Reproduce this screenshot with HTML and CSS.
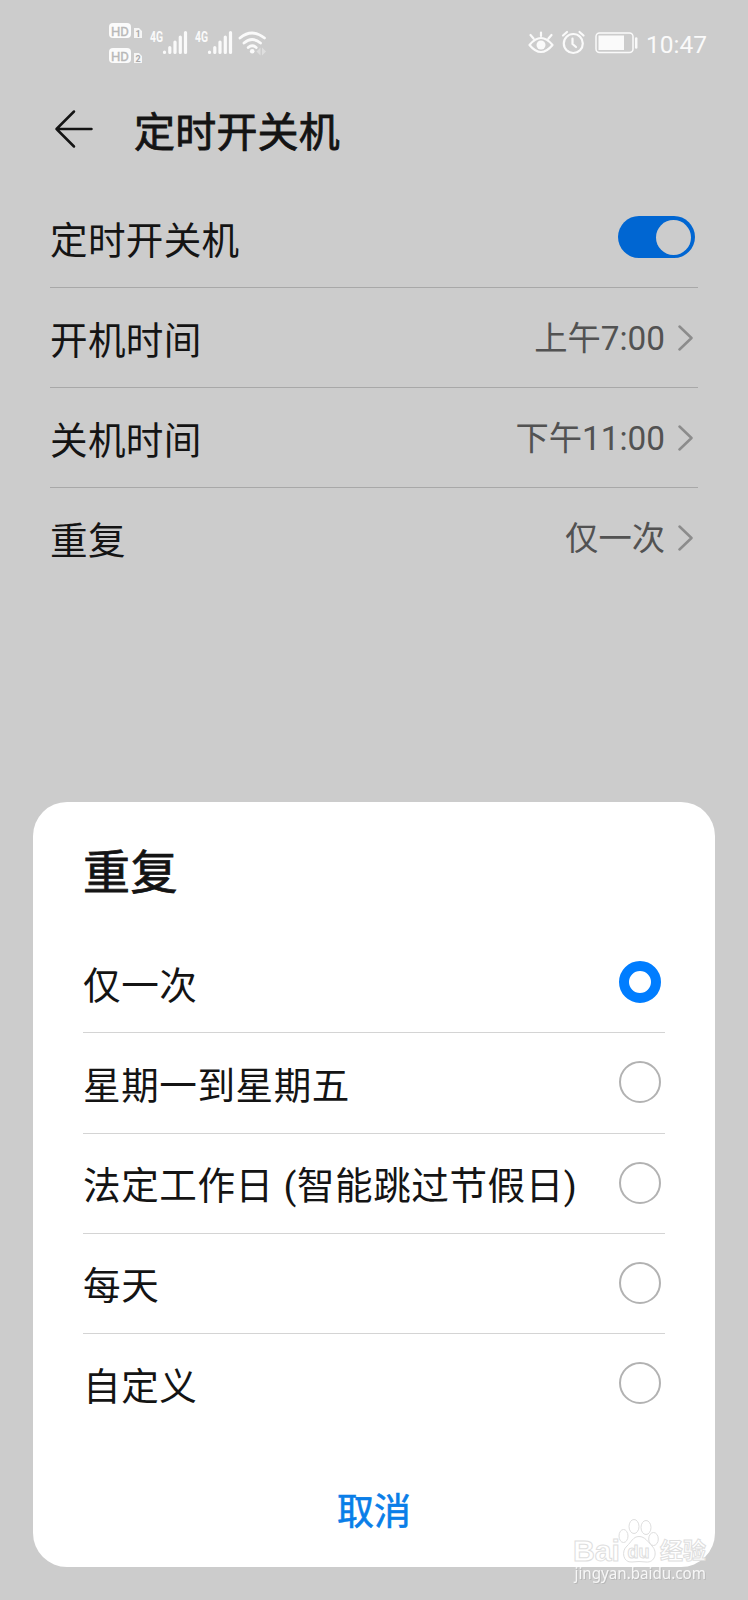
FILE: index.html
```html
<!DOCTYPE html>
<html lang="zh-CN">
<head>
<meta charset="utf-8">
<title>定时开关机</title>
<link rel="stylesheet" href="styles.css">
</head>
<body>
<div class="screen">
  <div class="status">
    <svg class="status-left" width="160" height="44" viewBox="108 20 160 44">
      <rect x="109" y="23" width="22" height="15" rx="4" fill="#fbfbfb"/>
      <rect x="109" y="48" width="22" height="15" rx="4" fill="#fbfbfb"/>
      <g class="hd">
        <text x="111" y="35.5" textLength="18" lengthAdjust="spacingAndGlyphs">HD</text>
        <text x="111" y="60.5" textLength="18" lengthAdjust="spacingAndGlyphs">HD</text>
      </g>
      <path d="M134 28h5l3 3v7h-8zM134 53h5l3 3v7h-8z" fill="#f5f5f5"/>
      <g class="sim"><text x="135.500" y="36.800">1</text><text x="135.500" y="61.800">2</text></g>
      <g class="net">
        <text x="150" y="42" textLength="13" lengthAdjust="spacingAndGlyphs">4G</text>
        <text x="195" y="42" textLength="13" lengthAdjust="spacingAndGlyphs">4G</text>
      </g>
      <g stroke="#fafafa" stroke-width="3.200" stroke-linecap="round">
        <path d="M164.500 52v.5M169.800 47.500v5M175 42v10.500M180.300 37v15.500M185.500 32.500v20"/>
        <path d="M209.500 52v.5M214.800 47.500v5M220 42v10.500M225.300 37v15.500M230.500 32.500v20"/>
      </g>
      <g fill="none" stroke="#fafafa" stroke-width="2.800" stroke-linecap="round">
        <path d="M240 38q12-10 24.500 0M244 43q8-7 16.500 0M248.200 47.500q4-3.500 8 0"/>
      </g>
      <circle cx="252.200" cy="51.200" r="2.300" fill="#fafafa"/>
      <path d="M260.500 47.500v8l-4-4zM262 47.500v8l4-4z" fill="#dedede"/>
    </svg>
    <div class="status-right">
      <svg width="112" height="30" viewBox="527 28 112 30" fill="none" stroke="#fafafa" stroke-width="2.200" stroke-linecap="round" stroke-linejoin="round">
        <path d="M529.500 45q11.500-14 23 0q-11.500 14-23 0zM541 36v-3.500M533.500 38.500l-3-3.500M548.500 38.500l3-3.500"/>
        <circle cx="541" cy="45" r="4.500" fill="#fafafa" stroke="none"/>
        <circle cx="573.300" cy="43.500" r="9.500"/>
        <path d="M572.500 38.500v5.500l3.500 3M563 35.500l4-3.500M579.500 32l4 3.500"/>
        <rect x="596" y="33" width="37" height="19.500" rx="3.500" stroke-width="1.500"/>
        <path d="M598.500 35.500H624V50h-25.500z" fill="#fafafa" stroke="none"/>
        <path d="M636.200 38.500v9" stroke-width="2.500"/>
      </svg>
      <span class="clock">10:47</span>
    </div>
  </div>

  <div class="header">
    <svg width="40" height="40" viewBox="0 0 40 40" fill="none" stroke="#141414" stroke-width="2.500" stroke-linecap="round" stroke-linejoin="round"><path d="M20 2.500L2.500 20L20 37.500M2.500 20H37.500"/></svg>
    <h1>定时开关机</h1>
  </div>

  <div class="settings">
    <div class="row"><span class="name">定时开关机</span><span class="switch"><span class="knob"></span></span></div>
    <div class="row"><span class="name">开机时间</span><span class="value">上午7:00</span><svg class="chev" viewBox="0 0 16 28"><path d="M1.500 2.500L13.500 14L1.500 25.500"/></svg></div>
    <div class="row"><span class="name">关机时间</span><span class="value">下午11:00</span><svg class="chev" viewBox="0 0 16 28"><path d="M1.500 2.500L13.500 14L1.500 25.500"/></svg></div>
    <div class="row"><span class="name">重复</span><span class="value">仅一次</span><svg class="chev" viewBox="0 0 16 28"><path d="M1.500 2.500L13.500 14L1.500 25.500"/></svg></div>
  </div>

  <div class="sheet">
    <h2>重复</h2>
    <div class="option"><span>仅一次</span><i class="radio on"></i></div>
    <div class="option"><span>星期一到星期五</span><i class="radio"></i></div>
    <div class="option"><span>法定工作日 (智能跳过节假日)</span><i class="radio"></i></div>
    <div class="option"><span>每天</span><i class="radio"></i></div>
    <div class="option"><span>自定义</span><i class="radio"></i></div>
    <div class="cancel">取消</div>
  </div>

  <svg class="watermark" width="160" height="80" viewBox="565 1510 160 80">
    <g class="mark">
      <text x="573" y="1561" font-size="30" textLength="47" lengthAdjust="spacingAndGlyphs">Bai</text>
      <ellipse cx="623.500" cy="1536" rx="4.500" ry="6.500"/>
      <ellipse cx="634" cy="1526.500" rx="5" ry="7"/>
      <ellipse cx="646" cy="1527.500" rx="5" ry="7"/>
      <ellipse cx="653.500" cy="1539" rx="4.800" ry="6.500"/>
      <path d="M639 1536.500c-6 0-8 6-12 9.500c-6 5-4 17 5 16q7-1 14 0c9 1 12-10 6-16c-4-4-7-9.500-13-9.500z"/>
      <text x="627.500" y="1558" font-size="18" textLength="22" lengthAdjust="spacingAndGlyphs">du</text>
      <text x="660" y="1559" font-size="23" textLength="46" lengthAdjust="spacingAndGlyphs">经验</text>
    </g>
    <text class="url" x="574.500" y="1578.700" textLength="131.500" lengthAdjust="spacingAndGlyphs">jingyan.baidu.com</text>
  </svg>
</div>
</body>
</html>
```
FILE: styles.css
```css
* { box-sizing: border-box; }
body { margin: 0; background: #ccc; font-family: Roboto, "Noto Sans CJK SC", sans-serif; color: #141414; }
.screen { position: relative; width: 748px; height: 1600px; overflow: hidden; background: #ccc; }
.status { display: flex; justify-content: space-between; height: 85px; padding: 20px 42px 0 108px; }
.status-left { flex: none; }
.hd { font: 13.5px Roboto, sans-serif; fill: #b8b8b8; stroke: #b8b8b8; stroke-width: .4px; }
.sim { font: bold 9px Roboto, sans-serif; fill: #aaa; }
.net { font: bold 14.5px Roboto, sans-serif; fill: #fafafa; }
.status-right { display: flex; align-items: center; height: 46px; gap: 7px; }
.clock { width: 60px; padding-top: 3px; font-size: 24.5px; line-height: 30px; color: #fafafa; white-space: nowrap; }
.header { display: flex; align-items: center; height: 88px; padding: 0 0 0 54px; }
.header h1 { margin: 7px 0 0 40px; font-size: 41px; line-height: 60px; font-weight: 400; letter-spacing: .2px; -webkit-text-stroke: .8px #141414; }
.settings { padding: 15px 50px 0; }
.row { display: flex; align-items: center; height: 100px; border-bottom: 1px solid #a8a8a8; }
.row:last-child { border-bottom: 0; }
.name { flex: 1; padding-top: 6px; font-size: 37.6px; line-height: 56px; letter-spacing: .3px; }
.switch { display: flex; justify-content: flex-end; width: 77px; height: 42px; margin: -1px 3px 0 0; padding: 3.500px 4px; border-radius: 21px; background: #0066d2; }
.knob { width: 35px; height: 35px; border-radius: 50%; background: #ccc; }
.value { padding-top: 2px; font-size: 33.300px; line-height: 50px; color: #525252; }
.chev { width: 16px; height: 28px; margin: 0 4px 0 13px; fill: none; stroke: #8c8c8c; stroke-width: 2.500; stroke-linecap: round; stroke-linejoin: round; }
.sheet { position: absolute; left: 33px; top: 802px; width: 682px; height: 765px; padding: 37px 50px 0; border-radius: 34px; background: #fff; }
.sheet h2 { margin: 0 0 26px; font-size: 47px; line-height: 68px; font-weight: 400; letter-spacing: .6px; -webkit-text-stroke: .8px #141414; }
.option { display: flex; align-items: center; justify-content: space-between; height: 100.25px; padding: 0 4px 1px 0; border-bottom: 1px solid #d4d4d4; font-size: 37.600px; line-height: 56px; letter-spacing: .55px; }
.option span { padding-top: 7px; white-space: nowrap; }
.option:nth-of-type(5) { border-bottom-color: transparent; }
.radio { flex: none; width: 42px; height: 42px; border: 2px solid #b2b2b2; border-radius: 50%; }
.radio.on { border: 10.500px solid #007dff; }
.cancel { margin-top: 51px; font-size: 37px; line-height: 56px; font-weight: 400; -webkit-text-stroke: .6px #0a7ee8; text-align: center; color: #0a7ee8; }
.watermark { position: absolute; left: 565px; top: 1510px; }
.mark { font-family: "Liberation Sans", "Noto Sans CJK SC", sans-serif; font-weight: bold; fill: #fff; stroke: #dedede; stroke-width: 1; }
.url { font: 17px "Noto Sans", sans-serif; fill: #f7f7f7; filter: drop-shadow(1px 1px 0 #b8b8b8); }
```
